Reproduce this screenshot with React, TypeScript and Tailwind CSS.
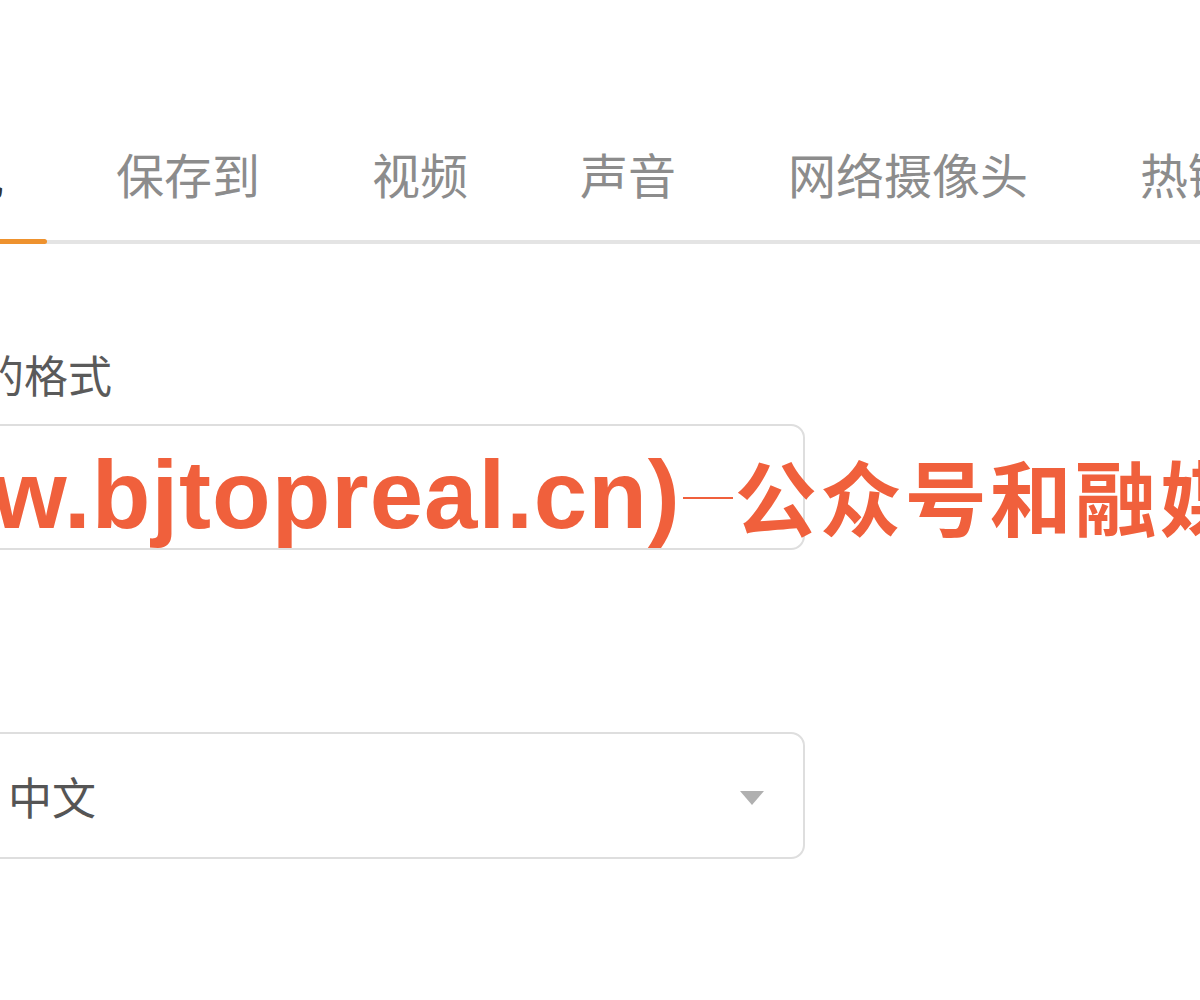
import React from "react";

const tabs = ["常规", "保存到", "视频", "声音", "网络摄像头", "热键"];

export default function App() {
  return (
    <div className="relative w-[1200px] h-[1000px] overflow-hidden bg-white font-['Noto_Sans_CJK_SC','Noto_Sans',sans-serif]">
      <div className="pt-[149px]">
        <div className="flex border-b-4 border-[#e4e4e4] ml-[-148px] w-[1400px]">
          {tabs.map((t, i) => (
            <div
              key={t}
              className={`relative px-[56px] pb-[43px] text-[48px] leading-[48px] whitespace-nowrap ${
                i === 0 ? "text-[#333]" : "text-[#8c8c8c]"
              }`}
            >
              {t}
              {i === 0 && (
                <div className="absolute left-[20px] right-[13px] bottom-[-4px] h-[5px] rounded-full bg-[#ee922e]" />
              )}
            </div>
          ))}
        </div>
      </div>

      <div className="ml-[-40px] w-[845px] pt-[108px]">
        <div className="text-[44px] leading-[44px] text-[#5a5a5a] ml-[-68px] whitespace-nowrap">
          视频的格式
        </div>
        <div className="mt-[28px] h-[126px] rounded-[14px] border-2 border-[#dedede] bg-white" />

        <div className="mt-[182px] h-[127px] rounded-[14px] border-2 border-[#dedede] bg-white flex items-center justify-between pl-[46px] pr-[38px]">
          <span className="text-[44px] leading-[44px] text-[#555]">中文</span>
          <svg width="26" height="16" viewBox="0 0 26 16" className="mt-[4px]">
            <path d="M1 1 L25 1 L13 15 Z" fill="#b0b0b0" />
          </svg>
        </div>
      </div>

      <div className="absolute left-[-8px] top-[435px] whitespace-nowrap flex items-center text-[#f0603c] font-bold">
        <span className="text-[96px] leading-[120px] tracking-[1px] font-['Liberation_Sans',sans-serif]">w.bjtopreal.cn)</span>
        <span className="inline-block w-[50px] h-[2px] bg-[#f0603c] ml-[2px] mr-[2px] mt-[6px]" />
        <span className="text-[82px] leading-[120px] tracking-[3px] font-['Noto_Sans_CJK_SC',sans-serif]">公众号和融媒体</span>
      </div>
    </div>
  );
}
